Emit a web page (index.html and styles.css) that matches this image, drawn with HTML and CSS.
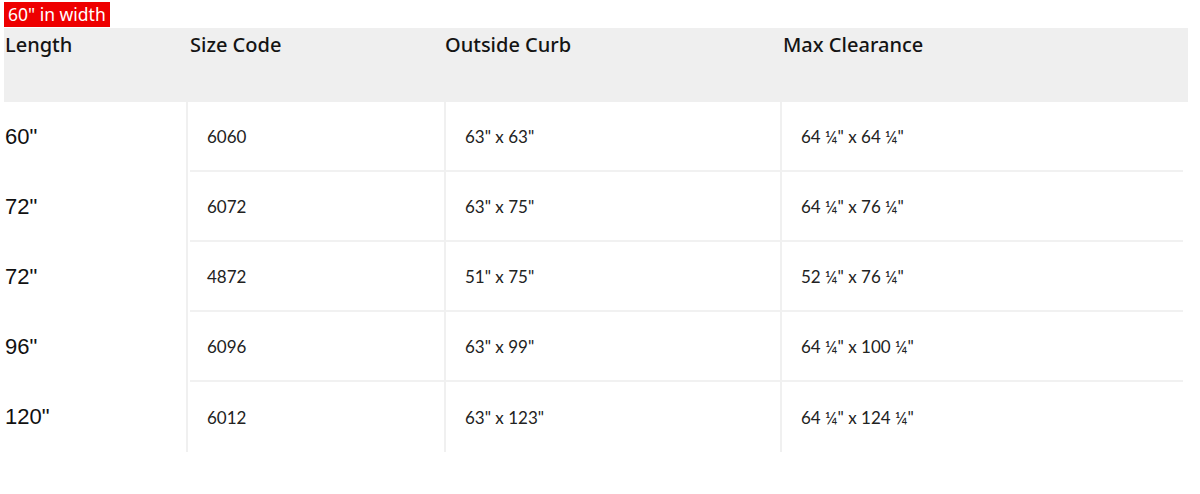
FILE: index.html
```html
<!DOCTYPE html>
<html>
<head>
<meta charset="utf-8">
<link rel="stylesheet" href="styles.css">
</head>
<body>
<div class="page">
  <div class="tag">60" in width</div>
  <div class="table">
    <div class="row head">
      <div class="cell c1">Length</div>
      <div class="cell c2">Size Code</div>
      <div class="cell c3">Outside Curb</div>
      <div class="cell c4">Max Clearance</div>
    </div>
    <div class="row body">
      <div class="cell c1">60"</div>
      <div class="cell c2">6060</div>
      <div class="cell c3">63" x 63"</div>
      <div class="cell c4">64 ¼" x 64 ¼"</div>
    </div>
    <div class="row body">
      <div class="cell c1">72"</div>
      <div class="cell c2">6072</div>
      <div class="cell c3">63" x 75"</div>
      <div class="cell c4">64 ¼" x 76 ¼"</div>
    </div>
    <div class="row body">
      <div class="cell c1">72"</div>
      <div class="cell c2">4872</div>
      <div class="cell c3">51" x 75"</div>
      <div class="cell c4">52 ¼" x 76 ¼"</div>
    </div>
    <div class="row body">
      <div class="cell c1">96"</div>
      <div class="cell c2">6096</div>
      <div class="cell c3">63" x 99"</div>
      <div class="cell c4">64 ¼" x 100 ¼"</div>
    </div>
    <div class="row body last">
      <div class="cell c1">120"</div>
      <div class="cell c2">6012</div>
      <div class="cell c3">63" x 123"</div>
      <div class="cell c4">64 ¼" x 124 ¼"</div>
    </div>
  </div>
</div>
</body>
</html>
```
FILE: styles.css
```css
html, body {
  margin: 0;
  padding: 0;
  background: #ffffff;
}
.page {
  padding: 2px 12px 0 4px;
  font-family: "Noto Sans", sans-serif;
  color: #111;
}
.tag {
  display: inline-block;
  background: #ee0000;
  color: #fff;
  font-family: "Noto Sans", sans-serif;
  font-size: 17.5px;
  line-height: 25px;
  padding: 0 4px;
  height: 25px;
  vertical-align: top;
}
.table {
  display: flex;
  flex-direction: column;
  margin-top: 1px;
}
.row {
  display: grid;
  grid-template-columns: 184px 256px 336px 1fr;
}
.head {
  background: #efefef;
  height: 74px;
}
.head .cell {
  font-family: "Noto Sans", sans-serif;
  font-weight: 500;
  font-size: 20px;
  line-height: 30px;
  padding-top: 2px;
  color: #141414;
}
.head .c1 { padding-left: 1px; }
.head .c2 { padding-left: 2px; }
.head .c3 { padding-left: 1px; }
.head .c4 { padding-left: 3px; }
.body {
  height: 70px;
}
.body .cell {
  display: flex;
  align-items: center;
  font-family: "Lato", sans-serif;
  font-size: 17px;
  color: #222;
  border-bottom: 2px solid #f1f1f1;
}
.body .c1 {
  font-family: "Liberation Sans", sans-serif;
  font-size: 22px;
  color: #111;
  padding-left: 1px;
  border-bottom: none;
  border-right: 2px solid #f0f0f0;
}
.body .c2 {
  padding-left: 17px;
  margin-left: 2px;
}
.body .c3 {
  padding-left: 19px;
  border-left: 2px solid #f0f0f0;
}
.body .c4 {
  padding-left: 19px;
  border-left: 2px solid #f0f0f0;
  margin-right: 5px;
}
.body.last .cell {
  border-bottom: none;
}
```
